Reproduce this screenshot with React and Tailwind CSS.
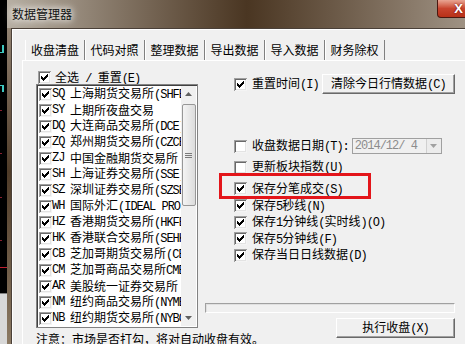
import React from 'react';

const tabs = ['收盘清盘', '代码对照', '整理数据', '导出数据', '导入数据', '财务除权'];

const markets = [
  ['SQ', '上海期货交易所(SHFE)'],
  ['SY', '上期所夜盘交易'],
  ['DQ', '大连商品交易所(DCE)'],
  ['ZQ', '郑州期货交易所(CZCE)'],
  ['ZJ', '中国金融期货交易所'],
  ['SH', '上海证券交易所(SSE)'],
  ['SZ', '深圳证券交易所(SZSE)'],
  ['WH', '国际外汇(IDEAL PRO)'],
  ['HZ', '香港期货交易所(HKFE)'],
  ['HK', '香港联合交易所(SEHK)'],
  ['CB', '芝加哥期货交易所(CBOT)'],
  ['CM', '芝加哥商品交易所CME'],
  ['AR', '美股统一证券交易所'],
  ['NM', '纽约商品交易所(NYMEX)'],
  ['NB', '纽约期货交易所(NYBOT)'],
];

// latin runs get a condensed mono face, like the old bitmap font
const Txt = ({ children }) =>
  String(children)
    .split(/([\x20-\x7e]+)/)
    .map((p, i) =>
      i % 2 ? (
        <span key={i} className="tracking-[-1px] whitespace-pre font-['Liberation_Mono',monospace]">
          {p}
        </span>
      ) : (
        p
      )
    );

// classic 13x13 checkbox
const Check = ({ checked }) => (
  <svg width="13" height="13" viewBox="0 0 13 13" shapeRendering="crispEdges" className="shrink-0">
    <rect x="0" y="0" width="13" height="13" fill="#fff" />
    <path d="M0 0h13v1H1v12H0z" fill="#a0a0a0" />
    <path d="M1 1h11v1H2v10H1z" fill="#696969" />
    <path d="M12 1h1v12H1v-1h11z" fill="#f4f4f4" />
    <path d="M11 2h1v10H2v-1h9z" fill="#e3e3e3" />
    {checked && (
      <path
        d="M3 5h1v3H3z M4 6h1v3H4z M5 7h1v3H5z M6 6h1v3H6z M7 5h1v3H7z M8 4h1v3H8z M9 3h1v3H9z"
        fill="#000"
      />
    )}
  </svg>
);

const Button = ({ children, className }) => (
  <div
    className={`flex items-center justify-center bg-[#f0f0f0] border border-t-white border-l-white border-r-[#696969] border-b-[#696969] shadow-[inset_-1px_-1px_0_#a0a0a0] ${className}`}
  >
    <span className="leading-[16px] whitespace-nowrap">
      <Txt>{children}</Txt>
    </span>
  </div>
);

const Option = ({ checked, label, className = '' }) => (
  <div className={`flex items-center gap-[5px] h-[16px] ${className}`}>
    <Check checked={checked} />
    <span className="leading-[16px] whitespace-nowrap">
      <Txt>{label}</Txt>
    </span>
  </div>
);

const App = () => {
  return (
    <div className="relative flex w-[465px] h-[344px] overflow-hidden bg-black text-[12px] leading-none text-black font-['Noto_Sans_CJK_SC',sans-serif]">
      {/* desktop behind the window */}
      <div className="relative w-[7px] h-full shrink-0 bg-black">
        <div className="absolute left-[2px] top-[45px] w-[2px] h-[8px] bg-[#3fc8c0]" />
        <div className="absolute left-0 top-[52px] w-[4px] h-[1px] bg-[#3fc8c0]" />
        <div className="absolute left-[2px] top-[85px] w-[2px] h-[7px] bg-[#3fc8c0]" />
        <div className="absolute left-0 top-[85px] w-[4px] h-[1px] bg-[#3fc8c0]" />
        <div className="absolute left-0 top-[110px] w-[2px] h-[1px] bg-[#8a2030]" />
        <div className="absolute left-0 top-[153px] w-[2px] h-[1px] bg-[#8a2030]" />
        <div className="absolute left-0 top-[197px] w-[2px] h-[1px] bg-[#8a2030]" />
        <div className="absolute left-0 top-[240px] w-[2px] h-[1px] bg-[#8a2030]" />
        <div className="absolute left-0 top-[267px] w-[7px] h-[1px] bg-[#c02030]" />
        <div className="absolute left-0 top-[293px] w-[7px] h-[51px] bg-[#d8d8d8] border-t border-[#808080]" />
      </div>

      {/* window */}
      <div className="relative flex flex-col w-[480px] shrink-0 h-full bg-gradient-to-b from-[#a09282] via-[#4e3b28] to-[#8c7a64]">
        <div className="relative h-[28px] shrink-0 pl-[5px] pt-[6px] bg-gradient-to-r from-[#b7afa3] via-[#4a3622] to-[#a89c8e]">
          <span className="text-[12px] leading-[16px] text-[#111] [text-shadow:0_0_6px_#fff,0_0_10px_#fff]">
            数据管理器
          </span>
          <div className="absolute left-[430px] top-0 w-[43px] h-[18px] rounded-bl-[4px] border border-t-0 border-[#4a1810] bg-gradient-to-b from-[#e8a593] via-[#c8442e] to-[#b83018] flex items-center justify-center">
            <span className="font-['Liberation_Sans',sans-serif] font-bold text-[13px] text-white [text-shadow:0_0_2px_#600]">X</span>
          </div>
        </div>

        {/* client area */}
        <div className="flex-1 ml-[4px] bg-[#f0f0f0] border-t border-l border-[#4a4038] shadow-[inset_1px_1px_0_#fff] pt-[11px] pl-[10px]">
          {/* tabs */}
          <div className="flex h-[20px] pl-[3px]">
            {tabs.map((t, i) => (
              <div
                key={t}
                className={`flex items-center justify-center w-[60px] h-[20px] border-r border-[#808080] ${
                  i === 0 ? 'border-l border-l-white' : 'shadow-[inset_1px_0_0_#fff]'
                }`}
              >
                {t}
              </div>
            ))}
          </div>

          {/* panel */}
          <div className="flex border-t border-l border-white h-[300px]">
            {/* left column */}
            <div className="flex flex-col w-[162px] ml-[13px] pt-[10px]">
              <div className="flex items-center gap-[4px] h-[13px] pl-[2px]">
                <Check checked />
                <span className="whitespace-nowrap">
                  <Txt>全选 / 重置(E)</Txt>
                </span>
              </div>
              <div className="flex h-[244px] border border-[#828282] shadow-[inset_1px_1px_0_#404040] bg-white p-[1px]">
                <div className="flex-1 overflow-hidden">
                  {markets.map(([code, name]) => (
                    <div key={code} className="flex items-center h-[16px] pl-[1px] whitespace-nowrap">
                      <Check checked />
                      <span className="w-[18px] shrink-0 leading-[16px] tracking-[-1px] font-['Liberation_Mono',monospace]">{code}</span>
                      <span className="leading-[16px]">
                        <Txt>{name}</Txt>
                      </span>
                    </div>
                  ))}
                </div>
                {/* scrollbar */}
                <div className="flex flex-col items-center w-[15px] shrink-0 bg-[#f0f0f0]">
                  <div className="flex items-center justify-center h-[16px] w-full">
                    <svg width="7" height="4" viewBox="0 0 7 4"><path d="M0 4L3.5 0L7 4z" fill="#606060" /></svg>
                  </div>
                  <div className="flex items-center justify-center w-[14px] h-[102px] mt-[2px] rounded-[2px] border border-[#979797] bg-gradient-to-r from-[#f4f4f4] to-[#dcdcdc]">
                    <svg width="7" height="7" viewBox="0 0 7 7" shapeRendering="crispEdges">
                      <path d="M0 1h7v1H0z M0 3h7v1H0z M0 5h7v1H0z" fill="#7a7a7a" />
                    </svg>
                  </div>
                  <div className="flex-1" />
                  <div className="flex items-center justify-center h-[16px] w-full">
                    <svg width="7" height="4" viewBox="0 0 7 4"><path d="M0 0L3.5 4L7 0z" fill="#606060" /></svg>
                  </div>
                </div>
              </div>
              <div className="mt-[3px] leading-[16px] whitespace-nowrap">
                注意：市场是否打勾，将对自动收盘有效。
              </div>
            </div>

            {/* right column */}
            <div className="relative flex flex-col w-[250px] ml-[7px]">
              <div className="flex items-center h-[20px] mt-[13px] ml-[29px]">
                <Option checked label="重置时间(I)" />
                <Button className="w-[138px] h-[20px] ml-[3px]">清除今日行情数据(C)</Button>
              </div>

              <div className="flex items-center h-[16px] mt-[44px] ml-[29px]">
                <Option label="收盘数据日期(T):" />
                <div className="flex items-center w-[90px] h-[16px] ml-[3px] border border-[#a0a0a0] bg-[#f0f0f0]">
                  <span className="flex-1 pl-[2px] text-[#8c8c8c] leading-[14px] tracking-[-1px] whitespace-pre font-['Liberation_Mono',monospace]">
                    2014/12/ 4
                  </span>
                  <div className="flex items-center justify-center w-[15px] h-[14px] border-l border-[#d0d0d0] bg-[#ececec]">
                    <svg width="7" height="4" viewBox="0 0 7 4"><path d="M0 0L3.5 4L7 0z" fill="#a0a0a0" /></svg>
                  </div>
                </div>
              </div>

              <Option className="mt-[5px] ml-[29px]" label="更新板块指数(U)" />
              <Option className="mt-[5px] ml-[29px] h-[17px]" checked label="保存分笔成交(S)" />
              <Option className="ml-[29px] h-[17px]" checked label="保存5秒线(N)" />
              <Option className="ml-[29px]" checked label="保存1分钟线(实时线)(O)" />
              <Option className="ml-[29px] h-[17px]" checked label="保存5分钟线(F)" />
              <Option className="ml-[29px]" checked label="保存当日日线数据(D)" />

              <div className="h-[10px] mt-[40px] border border-t-[#a0a0a0] border-l-[#a0a0a0] border-r-white border-b-white bg-[#f0f0f0] shadow-[inset_1px_1px_0_#e0e0e0]" />
              <div className="flex justify-end mt-[5px]">
                <Button className="w-[119px] h-[20px]">执行收盘(X)</Button>
              </div>

              {/* highlight annotation */}
              <div className="absolute left-[14px] top-[112px] w-[152px] h-[26px] border-[3px] border-[#e3151a]" />
            </div>
          </div>
        </div>
      </div>
    </div>
  );
};

export default App;
